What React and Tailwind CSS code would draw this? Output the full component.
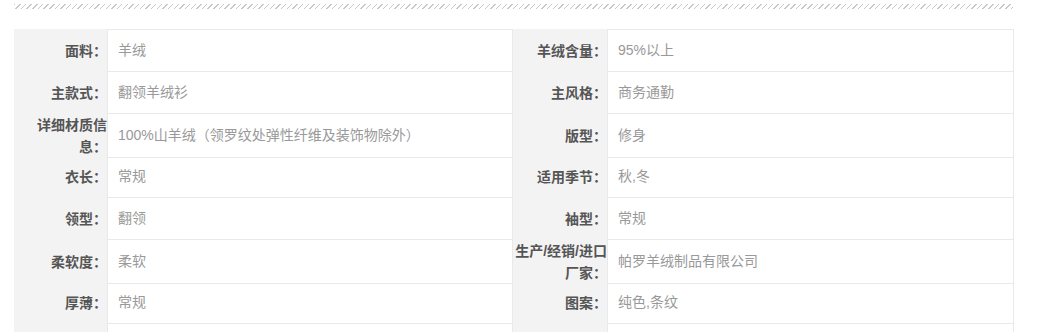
const rows = [
  ['面料：', '羊绒', '羊绒含量：', '95%以上'],
  ['主款式：', '翻领羊绒衫', '主风格：', '商务通勤'],
  ['详细材质信息：', '100%山羊绒（领罗纹处弹性纤维及装饰物除外）', '版型：', '修身'],
  ['衣长：', '常规', '适用季节：', '秋,冬'],
  ['领型：', '翻领', '袖型：', '常规'],
  ['柔软度：', '柔软', '生产/经销/进口厂家：', '帕罗羊绒制品有限公司'],
  ['厚薄：', '常规', '图案：', '纯色,条纹'],
  ['', '', '', ''],
]

function Label({ children }) {
  return (
    <div className="flex items-center justify-end bg-[#f3f3f3] text-right text-[14px] leading-[22px] font-bold text-[#555]">
      <span>{children}</span>
    </div>
  )
}

function Value({ children, first }) {
  return (
    <div
      className={`flex items-center border-r border-b border-l border-[#e9e9e9] pl-[10px] text-[14px] text-[#999] ${
        first ? 'border-t' : ''
      }`}
    >
      {children}
    </div>
  )
}

export default function App() {
  return (
    <div
      className="w-[1037px] bg-white pl-[14px] pt-[4px]"
      style={{ fontFamily: '"Liberation Sans", "Noto Sans CJK SC", sans-serif' }}
    >
      <div className="h-[5px] w-[999px] bg-[repeating-linear-gradient(135deg,#c8c8c8_0,#c8c8c8_1px,transparent_1px,transparent_4px)]" />

      <div className="mt-[20px] w-[1000px]">
        {rows.map((r, i) => (
          <div
            key={i}
            className={`grid grid-cols-[93px_406px_94px_407px] ${i === 0 ? 'h-[43px]' : 'h-[42px]'}`}
          >
            <Label>{r[0]}</Label>
            <Value first={i === 0}>{r[1]}</Value>
            <Label>{r[2]}</Label>
            <Value first={i === 0}>{r[3]}</Value>
          </div>
        ))}
      </div>
    </div>
  )
}
